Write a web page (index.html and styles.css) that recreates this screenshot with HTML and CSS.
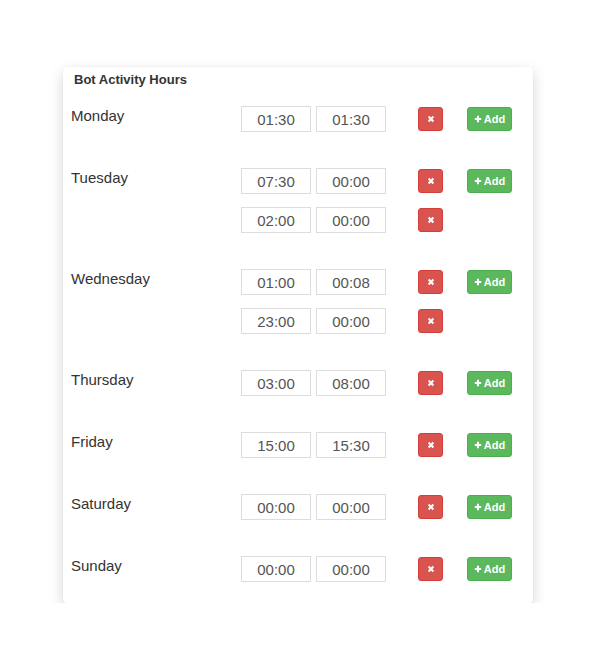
FILE: index.html
```html
<!DOCTYPE html>
<html lang="en">
<head>
<meta charset="utf-8">
<title>Bot Activity Hours</title>
<link rel="stylesheet" href="styles.css">
</head>
<body>
<div class="card">
  <div class="title">Bot Activity Hours</div>

  <div class="day">
    <div class="day-name">Monday</div>
    <div class="slots">
      <div class="slot">
        <input class="time" value="01:30"><input class="time" value="01:30">
        <button class="btn del"><svg viewBox="0 0 10 10"><path d="M2 2L8 8M8 2L2 8"/></svg></button>
        <button class="btn add"><svg viewBox="0 0 10 10"><path d="M5 1V9M1 5H9"/></svg>Add</button>
      </div>
    </div>
  </div>

  <div class="day">
    <div class="day-name">Tuesday</div>
    <div class="slots">
      <div class="slot">
        <input class="time" value="07:30"><input class="time" value="00:00">
        <button class="btn del"><svg viewBox="0 0 10 10"><path d="M2 2L8 8M8 2L2 8"/></svg></button>
        <button class="btn add"><svg viewBox="0 0 10 10"><path d="M5 1V9M1 5H9"/></svg>Add</button>
      </div>
      <div class="slot">
        <input class="time" value="02:00"><input class="time" value="00:00">
        <button class="btn del"><svg viewBox="0 0 10 10"><path d="M2 2L8 8M8 2L2 8"/></svg></button>
      </div>
    </div>
  </div>

  <div class="day">
    <div class="day-name">Wednesday</div>
    <div class="slots">
      <div class="slot">
        <input class="time" value="01:00"><input class="time" value="00:08">
        <button class="btn del"><svg viewBox="0 0 10 10"><path d="M2 2L8 8M8 2L2 8"/></svg></button>
        <button class="btn add"><svg viewBox="0 0 10 10"><path d="M5 1V9M1 5H9"/></svg>Add</button>
      </div>
      <div class="slot">
        <input class="time" value="23:00"><input class="time" value="00:00">
        <button class="btn del"><svg viewBox="0 0 10 10"><path d="M2 2L8 8M8 2L2 8"/></svg></button>
      </div>
    </div>
  </div>

  <div class="day">
    <div class="day-name">Thursday</div>
    <div class="slots">
      <div class="slot">
        <input class="time" value="03:00"><input class="time" value="08:00">
        <button class="btn del"><svg viewBox="0 0 10 10"><path d="M2 2L8 8M8 2L2 8"/></svg></button>
        <button class="btn add"><svg viewBox="0 0 10 10"><path d="M5 1V9M1 5H9"/></svg>Add</button>
      </div>
    </div>
  </div>

  <div class="day">
    <div class="day-name">Friday</div>
    <div class="slots">
      <div class="slot">
        <input class="time" value="15:00"><input class="time" value="15:30">
        <button class="btn del"><svg viewBox="0 0 10 10"><path d="M2 2L8 8M8 2L2 8"/></svg></button>
        <button class="btn add"><svg viewBox="0 0 10 10"><path d="M5 1V9M1 5H9"/></svg>Add</button>
      </div>
    </div>
  </div>

  <div class="day">
    <div class="day-name">Saturday</div>
    <div class="slots">
      <div class="slot">
        <input class="time" value="00:00"><input class="time" value="00:00">
        <button class="btn del"><svg viewBox="0 0 10 10"><path d="M2 2L8 8M8 2L2 8"/></svg></button>
        <button class="btn add"><svg viewBox="0 0 10 10"><path d="M5 1V9M1 5H9"/></svg>Add</button>
      </div>
    </div>
  </div>

  <div class="day">
    <div class="day-name">Sunday</div>
    <div class="slots">
      <div class="slot">
        <input class="time" value="00:00"><input class="time" value="00:00">
        <button class="btn del"><svg viewBox="0 0 10 10"><path d="M2 2L8 8M8 2L2 8"/></svg></button>
        <button class="btn add"><svg viewBox="0 0 10 10"><path d="M5 1V9M1 5H9"/></svg>Add</button>
      </div>
    </div>
  </div>
</div>
</body>
</html>
```

FILE: styles.css
```css
html, body {
  margin: 0;
  padding: 0;
  background: #fff;
}

body {
  font-family: "Liberation Sans", Arial, sans-serif;
  color: #333;
  padding: 67px 0 0 63px;
}

.card {
  width: 470px;
  box-sizing: border-box;
  padding: 4px 0 21px 8px;
  background: #fff;
  border-radius: 4px;
  box-shadow: 0 5px 14px rgba(0, 0, 0, 0.17), 0 0 2px rgba(0, 0, 0, 0.06);
}

.title {
  margin-left: 3px;
  font-size: 13px;
  font-weight: bold;
  line-height: 18px;
  color: #333;
  margin-bottom: 17px;
}

.day {
  display: grid;
  grid-template-columns: 170px auto;
  margin-bottom: 36px;
}

.day:last-child {
  margin-bottom: 0;
}

.day-name {
  font-size: 15px;
  line-height: 20px;
  color: #333;
}

.slots {
  display: flex;
  flex-direction: column;
  gap: 13px;
}

.slot {
  display: flex;
  align-items: center;
  height: 26px;
}

.time {
  width: 70px;
  height: 26px;
  box-sizing: border-box;
  margin: 0;
  padding: 0;
  border: 1px solid #ddd;
  background: #fff;
  text-align: center;
  font-family: "Liberation Sans", Arial, sans-serif;
  font-size: 15px;
  color: #555;
  outline: none;
}

.time + .time {
  margin-left: 5px;
}

.btn {
  height: 24px;
  box-sizing: border-box;
  margin: 0;
  padding: 0;
  border-radius: 3px;
  display: flex;
  align-items: center;
  justify-content: center;
  color: #fff;
  font-family: "Liberation Sans", Arial, sans-serif;
  cursor: pointer;
}

.btn svg {
  fill: none;
  stroke: #fff;
}

.del {
  width: 25px;
  margin-left: 32px;
  background: #d9534f;
  border: 1px solid #d43f3a;
}

.del svg {
  width: 8px;
  height: 8px;
  stroke-width: 2.6;
}

.add {
  width: 45px;
  margin-left: 24px;
  background: #5cb85c;
  border: 1px solid #4cae4c;
  font-size: 11px;
  font-weight: bold;
  gap: 2px;
}

.add svg {
  width: 8px;
  height: 8px;
  stroke-width: 2.6;
}
```
